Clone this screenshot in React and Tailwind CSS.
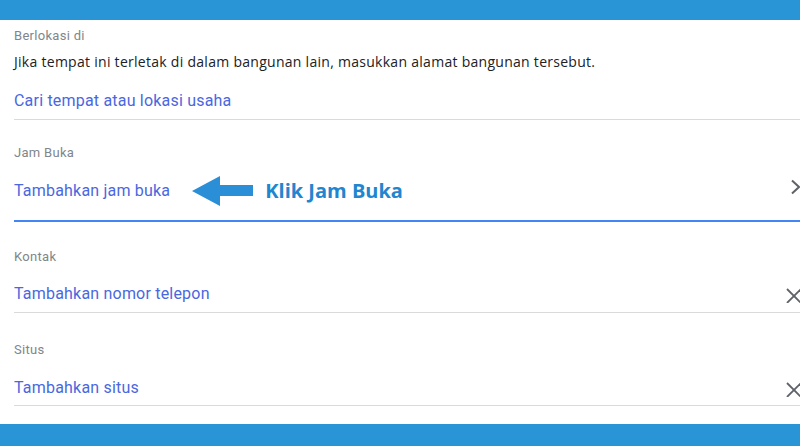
import React from 'react';

const Chevron = () => (
  <svg width="10" height="16" viewBox="0 0 10 16" className="ml-auto shrink-0 -mt-[8px]">
    <polyline points="2,1.5 9,8 2,14.5" fill="none" stroke="#5f6368" strokeWidth="2" />
  </svg>
);

const Close = () => (
  <svg width="14" height="15" viewBox="0 0 14 15" className="ml-auto shrink-0 mt-[3px]">
    <line x1="1" y1="1" x2="15" y2="15" stroke="#5f6368" strokeWidth="1.8" />
    <line x1="15" y1="1" x2="1" y2="15" stroke="#5f6368" strokeWidth="1.8" />
  </svg>
);

const Arrow = () => (
  <svg width="62" height="30" viewBox="0 0 62 30" className="shrink-0">
    <polygon points="0,15 28,0 28,9 61,9 61,20 28,20 28,30" fill="#2a8fd6" />
  </svg>
);

const Label = ({ children }) => (
  <div className="text-[13px] leading-4 tracking-[0.3px] text-[#80868b] font-['Roboto',sans-serif]">{children}</div>
);

const LinkText = ({ children }) => (
  <span className="text-[16px] leading-6 tracking-[0.2px] text-[#4a67e0] font-['Roboto',sans-serif] whitespace-nowrap">
    {children}
  </span>
);

export default function App() {
  return (
    <div className="w-[800px] h-[446px] flex flex-col bg-white overflow-hidden">
      <div className="h-[20px] bg-[#2994d6] shrink-0" />

      <div className="flex-1 pl-[14px]">
        {/* Berlokasi di */}
        <div className="pt-[8px] pb-[6px] border-b border-[#dadada]">
          <Label>Berlokasi di</Label>
          <p className="mt-2 text-[14px] leading-5 tracking-[0.28px] text-[#202124] font-['Open_Sans',sans-serif]">
            Jika tempat ini terletak di dalam bangunan lain, masukkan alamat bangunan tersebut.
          </p>
          <div className="mt-4">
            <LinkText>Cari tempat atau lokasi usaha</LinkText>
          </div>
        </div>

        {/* Jam Buka */}
        <div className="pt-[25px] pb-[17px] border-b-2 border-[#4285f4]">
          <Label>Jam Buka</Label>
          <div className="mt-[18px] h-6 flex items-center">
            <LinkText>Tambahkan jam buka</LinkText>
            <div className="ml-[22px] flex items-center">
              <Arrow />
              <span className="ml-[11px] text-[20px] font-bold text-[#2185cf] font-['Open_Sans',sans-serif] whitespace-nowrap">
                Klik Jam Buka
              </span>
            </div>
            <Chevron />
          </div>
        </div>

        {/* Kontak */}
        <div className="pt-[27px] pb-[6px] border-b border-[#dadada]">
          <Label>Kontak</Label>
          <div className="mt-[17px] h-6 flex items-center">
            <LinkText>Tambahkan nomor telepon</LinkText>
            <Close />
          </div>
        </div>

        {/* Situs */}
        <div className="pt-[29px] pb-[5px] border-b border-[#dadada]">
          <Label>Situs</Label>
          <div className="mt-[18px] h-6 flex items-center">
            <LinkText>Tambahkan situs</LinkText>
            <Close />
          </div>
        </div>
      </div>

      <div className="h-[22px] bg-[#2994d6] shrink-0" />
    </div>
  );
}
